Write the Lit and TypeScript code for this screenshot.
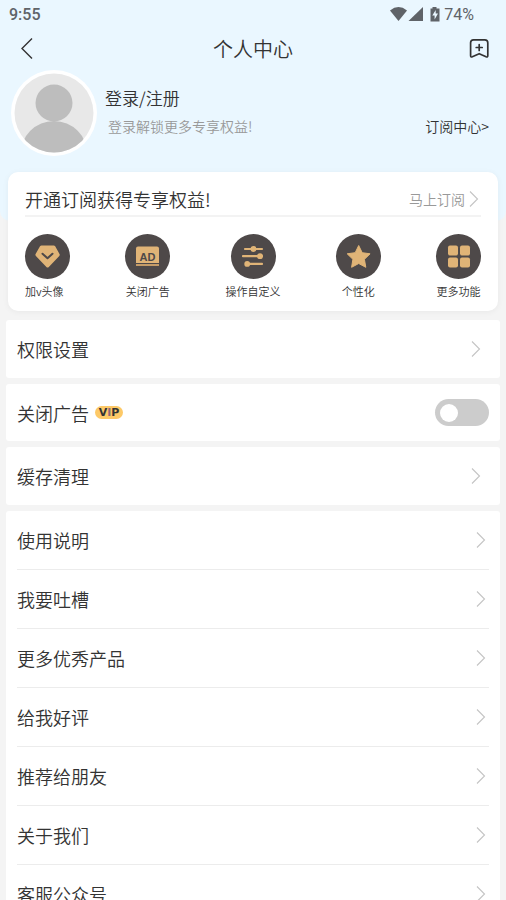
import { LitElement, html, css, svg } from "lit";
import { customElement, state } from "lit/decorators.js";

const chevron = html`<svg class="chevron" width="10" height="18" viewBox="0 0 10 18" aria-hidden="true">
  <path d="M1 1.5 8.5 9 1 16.5" fill="none" stroke="#c4c4c4" stroke-width="1.1" /></svg>`;

const icons = {
  gem: svg`<path d="M16.5 11.500h12.2q.9 0 1.5.8l4.3 7.6q.6 1.1-.2 2l-10.500 11q-1.200 1.100-2.400 0l-10.500-11q-.9-1-.3-2l4.400-7.600q.6-.8 1.500-.8Z" fill="#e0b477"/>
    <path d="m17.500 19.700 5 4.600 5-4.600" fill="none" stroke="#4e4949" stroke-width="2" stroke-linecap="round" stroke-linejoin="round"/>`,
  ad: svg`<path d="M13 12.500h19q2 0 2 2v14.500H11V14.500q0-2 2-2Z" fill="#e0b477"/>
    <path d="M11 31h23" stroke="#c59c68" stroke-width="2"/>
    <text x="22.500" y="27" text-anchor="middle" class="ad-text">AD</text>`,
  sliders: svg`<g stroke="#e0b477" stroke-width="2.200" stroke-linecap="round" fill="#e0b477">
    <path d="M14 15h17M12 22.200h19M16 29.900h15"/></g>
    <g fill="#e0b477"><circle cx="22.500" cy="15" r="2.900"/><circle cx="29" cy="22.200" r="2.900"/><circle cx="16.200" cy="29.900" r="2.900"/></g>`,
  star: svg`<path d="m22.700 11.500 3.500 7.200 7.900 1.100-5.700 5.500 1.400 8-7.100-3.800-7.100 3.800 1.300-8-5.700-5.500 8-1.100Z" fill="#e0b477" stroke="#e0b477" stroke-width="1" stroke-linejoin="round"/>`,
  grid: svg`<g fill="#e0b477"><rect x="12" y="11.500" width="10" height="10" rx="2"/><rect x="24" y="11.500" width="10" height="10" rx="2"/><rect x="12" y="23.500" width="10" height="10" rx="2"/><rect x="24" y="23.500" width="10" height="10" rx="2"/></g>`,
};

const features = [
  { label: "加v头像", icon: icons.gem },
  { label: "关闭广告", icon: icons.ad },
  { label: "操作自定义", icon: icons.sliders },
  { label: "个性化", icon: icons.star },
  { label: "更多功能", icon: icons.grid },
];

const links = ["使用说明", "我要吐槽", "更多优秀产品", "给我好评", "推荐给朋友", "关于我们", "客服公众号"];

@customElement("app-root")
export class AppRoot extends LitElement {
  @state() private adsOff = false;

  static styles = css`
    :host {
      display: block;
      height: 100vh;
      overflow-y: auto;
      scrollbar-width: none;
      background: #f4f4f4;
      color: #333;
      font-family: "Noto Sans CJK SC", sans-serif;
      font-weight: 350;
    }
    * { box-sizing: border-box; }
    svg { display: block; flex: none; }
    h1, h2, p, ul { margin: 0; padding: 0; font-weight: inherit; }
    ul { list-style: none; }
    button {
      border: 0;
      padding: 0;
      background: none;
      color: inherit;
      font: inherit;
      text-align: left;
      cursor: pointer;
    }
    a { color: inherit; text-decoration: none; }
    .hero {
      background: #eaf7ff;
      border-radius: 0 0 10px 10px;
      padding-bottom: 65px;
    }
    .status {
      display: flex;
      align-items: center;
      justify-content: space-between;
      height: 29px;
      padding: 1px 32px 0 9px;
      color: #5f6368;
      font: 400 16px/28px Roboto, sans-serif;
    }
    .clock { font-weight: 500; }
    .signals { display: flex; align-items: center; gap: 4px; }
    .nav {
      display: grid;
      grid-template-columns: 24px 1fr 24px;
      align-items: center;
      height: 40px;
      padding: 0 15px;
    }
    .nav h1 { font-size: 20px; line-height: 40px; text-align: center; }
    .profile {
      display: flex;
      align-items: center;
      gap: 8px;
      padding: 1px 17px 0 11px;
    }
    .who { flex: 1; padding-bottom: 3px; }
    .login { display: block; font-size: 17px; line-height: 28px; }
    .hint {
      display: flex;
      justify-content: space-between;
      padding-left: 3px;
      font-size: 14px;
      line-height: 28px;
    }
    .muted { color: #999; }
    .member {
      margin: -49px 8px 0;
      padding: 12px 17px 11px;
      border-radius: 10px;
      background: #fff;
      box-shadow: 0 1px 6px #0000000d;
    }
    .member-head {
      display: flex;
      align-items: center;
      justify-content: space-between;
      padding-bottom: 1px;
      border-bottom: 2px solid #f3f3f3;
    }
    .member-head h2 { font-size: 18px; line-height: 30px; }
    .subscribe {
      display: flex;
      align-items: center;
      gap: 4px;
      padding-right: 2px;
      font-size: 14px;
    }
    .features { display: flex; justify-content: space-between; padding-top: 17px; }
    .feature {
      display: flex;
      flex-direction: column;
      align-items: center;
      gap: 3px;
      min-width: 45px;
      font-size: 11px;
      line-height: 18px;
    }
    .features li:first-child .feature { align-items: flex-start; }
    .disc { border-radius: 50%; background: #4e4949; }
    .ad-text { font: 700 11px "Liberation Sans", sans-serif; fill: #4e4949; }
    .groups {
      display: flex;
      flex-direction: column;
      gap: 6px;
      padding: 9px 6px;
      font-size: 18px;
      line-height: 28px;
    }
    .group { border-radius: 3px; background: #fff; padding: 0 11px; }
    .row {
      display: flex;
      align-items: center;
      justify-content: space-between;
      width: 100%;
      height: 58px;
      padding-right: 3px;
    }
    .inset { padding-right: 8px; }
    .toggle { height: 57px; padding: 0; }
    .group li + li { border-top: 1px solid #ececec; }
    .name { display: flex; align-items: center; gap: 6px; }
    .vip {
      width: 28px;
      border-radius: 7px;
      background: #fdc967;
      color: #333;
      font: 700 11px/13px "DejaVu Sans", sans-serif;
      text-align: center;
    }
    .vip-mid { color: #8d6a78; }
    .switch {
      appearance: none;
      display: flex;
      align-items: center;
      width: 54px;
      height: 27px;
      margin: 0;
      padding: 0 5px;
      border-radius: 14px;
      background: #ccc;
      cursor: pointer;
    }
    .switch::before {
      content: "";
      width: 18px;
      height: 18px;
      border-radius: 50%;
      background: #fff;
    }
    .switch:checked { justify-content: flex-end; background: #e0b477; }
  `;

  render() {
    return html`
      <header class="hero">
        <div class="status">
          <span class="clock">9:55</span>
          <span class="signals">
            <svg width="50" height="16" viewBox="0 1 50 16" fill="#5f6368" aria-hidden="true">
              <path d="M0 4.500Q8.500-2.400 17 4.500L8.500 15Z" />
              <path d="M33 1v14H18.500Z" />
              <path d="M42.500 1h4v1.500H49.500V15.500H40.500V2.500H42.500Z" />
              <path d="M45.700 4 42.300 9.500H44.600v4L48 7.500H45.700Z" fill="#eaf7ff" />
            </svg>
            <span>74%</span>
          </span>
        </div>
        <nav class="nav">
          <button aria-label="返回">
            <svg width="24" height="24" viewBox="0 1 24 24" fill="none" stroke="#333" stroke-width="1.400">
              <path d="M17 2.500 7 12.500l10 10" />
            </svg>
          </button>
          <h1>个人中心</h1>
          <button aria-label="收藏">
            <svg width="24" height="24" viewBox="0 1 24 24" fill="none" stroke="#333" stroke-width="1.700" stroke-linejoin="round" stroke-linecap="round">
              <path d="M6.500 3.800h11.300q3 0 3 3v12.800q0 1.900-1.700 1.200l-6.900-3.100-6.900 3.100q-1.700.7-1.700-1.200V6.800q0-3 2.900-3Z" />
              <path d="M12.200 8.500v6M9.200 11.500h6" />
            </svg>
          </button>
        </nav>
        <section class="profile">
          <svg width="86" height="86" viewBox="0 0 86 86" aria-hidden="true">
            <clipPath id="face"><circle cx="43" cy="43" r="39.500" /></clipPath>
            <circle cx="43" cy="43" r="43" fill="#fff" />
            <g clip-path="url(#face)">
              <rect width="86" height="86" fill="#e8e8e8" />
              <g fill="#bdbdbd"><circle cx="43" cy="33" r="18.500" /><circle cx="43" cy="84.500" r="33.500" /></g>
            </g>
          </svg>
          <div class="who">
            <a class="login" href="#login">登录/注册</a>
            <div class="hint">
              <span class="muted">登录解锁更多专享权益!</span>
              <a href="#center">订阅中心&gt;</a>
            </div>
          </div>
        </section>
      </header>
      <section class="member">
        <div class="member-head">
          <h2>开通订阅获得专享权益!</h2>
          <a class="subscribe muted" href="#subscribe">马上订阅 ${chevron}</a>
        </div>
        <ul class="features">
          ${features.map(
            (f) => html`<li><button class="feature">
              <svg class="disc" width="45" height="45" viewBox="0 0 45 45" aria-hidden="true">${f.icon}</svg>
              <span>${f.label}</span>
            </button></li>`
          )}
        </ul>
      </section>
      <main class="groups">
        <div class="group"><button class="row inset">权限设置 ${chevron}</button></div>
        <div class="group">
          <label class="row toggle">
            <span class="name">关闭广告 <span class="vip">V<span class="vip-mid">I</span>P</span></span>
            <input class="switch" type="checkbox" role="switch" .checked=${this.adsOff}
              @change=${(e: Event) => (this.adsOff = (e.target as HTMLInputElement).checked)} />
          </label>
        </div>
        <div class="group"><button class="row inset">缓存清理 ${chevron}</button></div>
        <ul class="group">
          ${links.map((t) => html`<li><button class="row">${t} ${chevron}</button></li>`)}
        </ul>
      </main>
    `;
  }
}
